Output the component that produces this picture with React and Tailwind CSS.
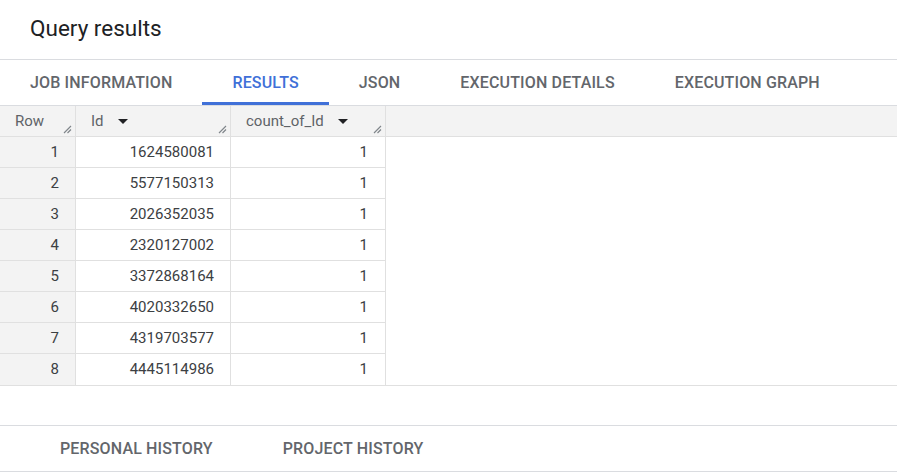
import React from "react";

const rows = [
  ["1", "1624580081", "1"],
  ["2", "5577150313", "1"],
  ["3", "2026352035", "1"],
  ["4", "2320127002", "1"],
  ["5", "3372868164", "1"],
  ["6", "4020332650", "1"],
  ["7", "4319703577", "1"],
  ["8", "4445114986", "1"],
];

const tabs = ["JOB INFORMATION", "RESULTS", "JSON", "EXECUTION DETAILS", "EXECUTION GRAPH"];

const Grip = () => (
  <svg className="absolute right-[3px] bottom-[2px]" width="9" height="9" viewBox="0 0 9 9">
    <path d="M1 8 L8 1 M4.5 8 L8 4.5" stroke="#80868b" strokeWidth="1.2" />
  </svg>
);

const Caret = () => (
  <svg width="10" height="5" viewBox="0 0 10 5" className="ml-[14px]">
    <path d="M0 0 L10 0 L5 5 Z" fill="#202124" />
  </svg>
);

const App = () => {
  return (
    <div className="w-[897px] h-[472px] bg-white overflow-hidden font-['Roboto',sans-serif]">
      {/* Title */}
      <div className="h-[59px] flex items-center pl-[30px] pb-[3px]">
        <h1 className="text-[22.5px] text-[#202124] leading-none">Query results</h1>
      </div>

      {/* Tabs */}
      <div className="h-[47px] border-y border-[#dadce0] flex">
        {tabs.map((tab) => (
          <div
            key={tab}
            className={`h-full px-[30px] flex items-center text-[16px] font-medium tracking-[0.15px] relative ${
              tab === "RESULTS" ? "text-[#4070d8]" : "text-[#63666b]"
            }`}
          >
            {tab}
            {tab === "RESULTS" && (
              <div className="absolute left-0 right-0 bottom-0 h-[3px] bg-[#4070d8]"></div>
            )}
          </div>
        ))}
      </div>

      {/* Table */}
      <div className="border-b border-[#e0e0e0]">
        <div className="flex h-[31px] bg-[#f3f3f3] border-b border-[#e0e0e0] text-[15px] text-[#5f6368]">
          <div className="relative w-[76px] pl-[15px] flex items-center border-r border-[#e0e0e0]">
            Row
            <Grip />
          </div>
          <div className="relative w-[155px] pl-[15px] flex items-center border-r border-[#e0e0e0]">
            Id
            <Caret />
            <Grip />
          </div>
          <div className="relative w-[155px] pl-[15px] flex items-center border-r border-[#e0e0e0]">
            count_of_Id
            <Caret />
            <Grip />
          </div>
        </div>
        {rows.map(([n, id, count], i) => (
          <div key={n} className="flex h-[31px] text-[15px] text-[#3c4043]">
            <div
              className={`w-[76px] bg-[#f3f3f3] pr-[16px] flex items-center justify-end border-r border-[#e0e0e0] ${
                i < rows.length - 1 ? "border-b" : ""
              }`}
            >
              {n}
            </div>
            <div
              className={`w-[155px] pr-[16px] flex items-center justify-end border-r border-[#e0e0e0] ${
                i < rows.length - 1 ? "border-b" : ""
              }`}
            >
              {id}
            </div>
            <div
              className={`w-[155px] pr-[17px] flex items-center justify-end border-r border-[#e0e0e0] ${
                i < rows.length - 1 ? "border-b" : ""
              }`}
            >
              {count}
            </div>
          </div>
        ))}
      </div>

      {/* History tabs */}
      <div className="mt-[39px] h-[47px] border-y border-[#dadce0] flex pl-[25px]">
        {["PERSONAL HISTORY", "PROJECT HISTORY"].map((tab) => (
          <div key={tab} className="h-full px-[35px] flex items-center text-[16px] font-medium tracking-[0.15px] text-[#63666b]">
            {tab}
          </div>
        ))}
      </div>
    </div>
  );
};

export default App;
